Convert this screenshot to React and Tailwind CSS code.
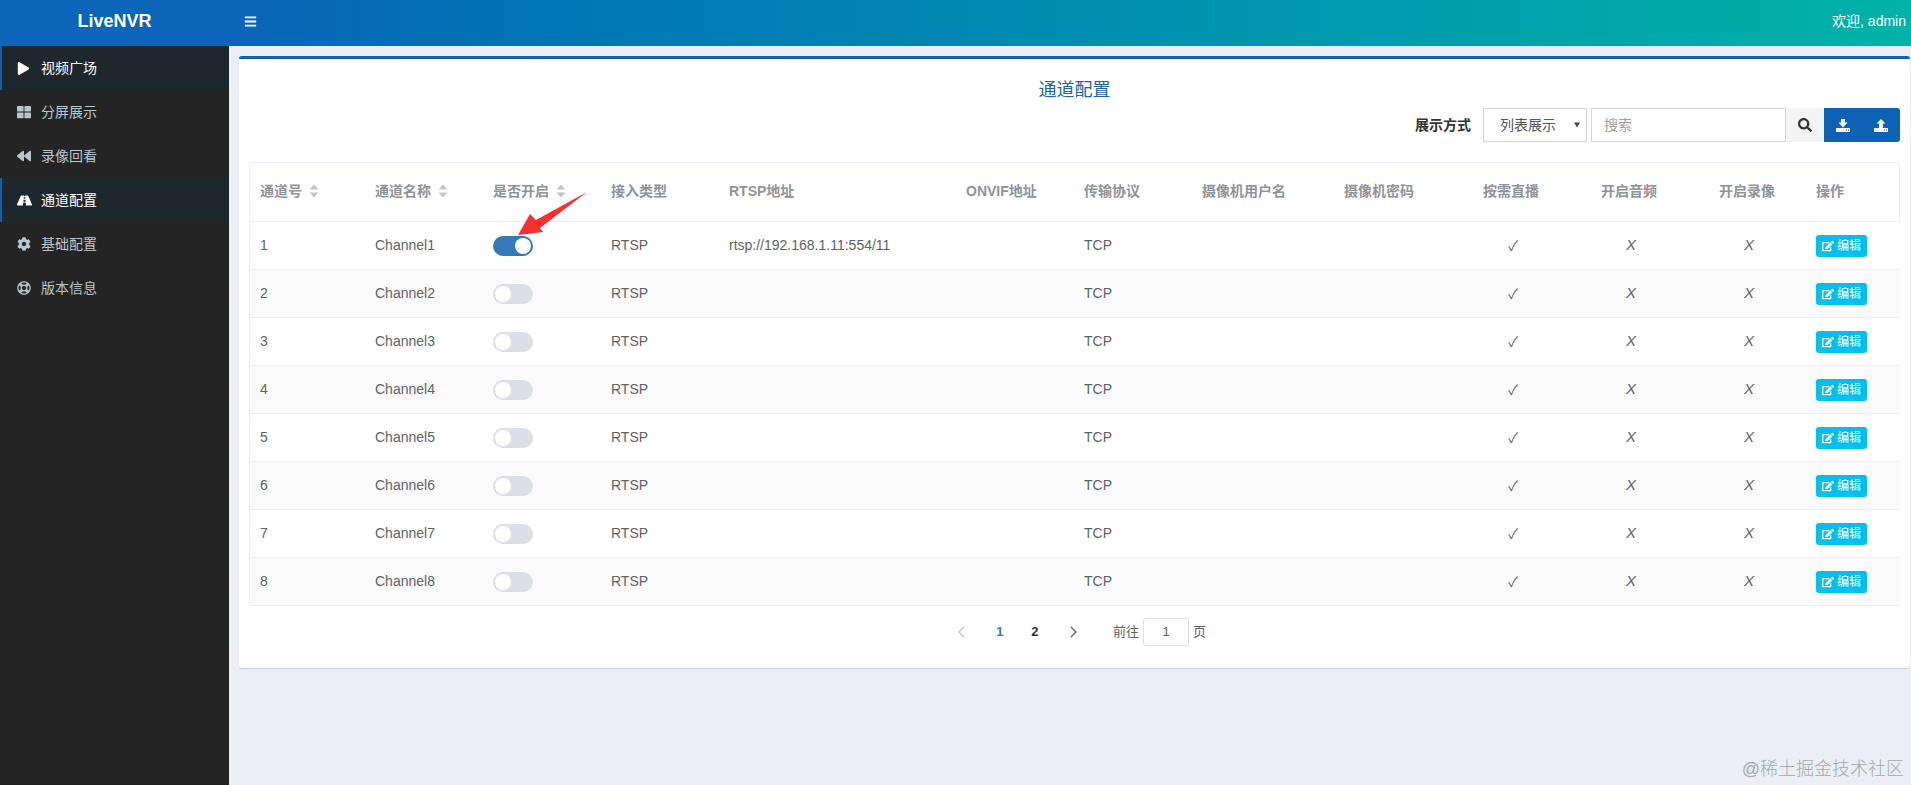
import React from 'react';
import { FaBars, FaPlay, FaThLarge, FaBackward, FaRoad, FaCog, FaRegLifeRing, FaSearch, FaEdit } from 'react-icons/fa';

const menu = [
  { label: '视频广场', icon: FaPlay, size: 'text-[13px]', active: true, bright: true },
  { label: '分屏展示', icon: FaThLarge, size: 'text-[14px]' },
  { label: '录像回看', icon: FaBackward, size: 'text-[14px]' },
  { label: '通道配置', icon: FaRoad, size: 'text-[15px]', active: true, bright: true },
  { label: '基础配置', icon: FaCog, size: 'text-[14px]' },
  { label: '版本信息', icon: FaRegLifeRing, size: 'text-[14px]' },
];

const headers = [
  { label: '通道号', sort: true },
  { label: '通道名称', sort: true },
  { label: '是否开启', sort: true },
  { label: '接入类型' },
  { label: 'RTSP地址' },
  { label: 'ONVIF地址' },
  { label: '传输协议' },
  { label: '摄像机用户名' },
  { label: '摄像机密码' },
  { label: '按需直播', center: true },
  { label: '开启音频', center: true },
  { label: '开启录像', center: true },
  { label: '操作' },
];

const widths = ['w-[115px]', 'w-[118px]', 'w-[118px]', 'w-[118px]', 'w-[237px]', 'w-[118px]', 'w-[118px]', 'w-[142px]', 'w-[118px]', 'w-[118px]', 'w-[118px]', 'w-[118px]', 'w-[94px]'];

const rows = [1, 2, 3, 4, 5, 6, 7, 8];

function SortCaret() {
  return (
    <svg width="10" height="14" viewBox="0 0 10 14" className="ml-[7px] inline-block align-[-2px]">
      <path d="M5 0.5 L9.5 5.5 L0.5 5.5 Z" fill="#c0c4cc" />
      <path d="M5 13.5 L9.5 8.5 L0.5 8.5 Z" fill="#c0c4cc" />
    </svg>
  );
}

function Switch({ on }) {
  return (
    <span className={`flex h-[20px] w-[40px] items-center rounded-full p-[2px] ${on ? 'justify-end bg-[#337ab7]' : 'justify-start bg-[#dcdfe6]'}`}>
      <span className="h-[16px] w-[16px] rounded-full bg-white" />
    </span>
  );
}

function Arrow() {
  return (
    <svg width="72" height="46" viewBox="0 0 72 46" className="absolute left-[25px] top-[-46px]">
      <path d="M0 45 L12 24 L18 30 L69 2 L22 38 L25 42 Z" fill="#f5302f" />
    </svg>
  );
}

function Tray() {
  return (
    <>
      <path d="M0 9 H14 V13 H0 Z" fill="white" />
      <path d="M10 10.5 H11 V11.5 H10 Z M12 10.5 H13 V11.5 H12 Z" fill="#0d62b4" />
    </>
  );
}

export default function App() {
  return (
    <div className="flex h-[785px] flex-col overflow-hidden bg-[#ebeff5] font-['Liberation_Sans','Noto_Sans_CJK_SC',sans-serif] text-[14px]">
      <header className="flex h-[46px] shrink-0 items-center bg-linear-to-r from-[#0b65b8] from-12% to-[#00b3a6] pb-[4px] text-white">
        <div className="w-[229px] text-center text-[18px] font-bold">LiveNVR</div>
        <FaBars className="ml-[15px] text-[13px]" />
        <div className="ml-auto pr-[5px] text-[14px]">欢迎, admin</div>
      </header>

      <div className="relative flex min-h-0 flex-1">
        <aside className="w-[229px] shrink-0 bg-[#242424]">
          {menu.map((item) => {
            const Icon = item.icon;
            return (
              <div
                key={item.label}
                className={`flex h-[44px] items-center border-l-2 pl-[15px] ${item.active ? 'border-[#0b62b4] bg-[#1e282c]' : 'border-transparent'} ${item.bright ? 'text-white' : 'text-[#b8c7ce]'}`}
              >
                <span className="flex w-[24px] shrink-0 items-center"><Icon className={item.size} /></span>
                <span>{item.label}</span>
              </div>
            );
          })}
        </aside>

        <main className="min-w-0 flex-1 pl-[10px] pr-[1px] pt-[10px]">
          <section className="h-[612px] rounded-[3px] border-t-[3px] border-[#0b62b4] bg-white px-[10px] shadow-[0_1px_1px_rgba(0,0,0,0.15)]">
            <h2 className="pt-[19px] text-center text-[18px] leading-[24px] text-[#1a68a5]">通道配置</h2>

            <div className="mt-[6px] flex h-[34px] items-center justify-end">
              <span className="mr-[12px] font-bold text-[#333333]">展示方式</span>
              <div className="relative mr-[4px] h-[34px] w-[104px]">
                <select className="h-full w-full appearance-none border border-[#d2d6de] bg-white pl-[16px] text-[14px] text-[#555555] outline-none">
                  <option>列表展示</option>
                </select>
                <svg width="6" height="6" viewBox="0 0 7 6" className="absolute right-[7px] top-[14px]">
                  <path d="M0 0 H7 L3.5 6 Z" fill="#444444" />
                </svg>
              </div>
              <input
                placeholder="搜索"
                className="h-[34px] w-[195px] border border-[#d2d6de] bg-white pl-[12px] text-[14px] outline-none placeholder:text-[#a0a0a0]"
              />
              <button className="flex h-[34px] w-[38px] items-center justify-center bg-[#f4f4f4] text-[#333333]">
                <FaSearch className="text-[14px]" />
              </button>
              <div className="flex h-[34px] w-[76px] items-center rounded-r-[3px] bg-[#0d62b4] text-white">
                <button className="flex w-[38px] justify-center">
                  <svg width="14" height="13" viewBox="0 0 14 13" fill="white">
                    <path d="M5 0 H9 V3.5 H11.5 L7 8.5 L2.5 3.5 H5 Z" />
                    <Tray />
                  </svg>
                </button>
                <button className="flex w-[38px] justify-center">
                  <svg width="14" height="13" viewBox="0 0 14 13" fill="white">
                    <path d="M7 0 L11.5 4.5 H9 V9 H5 V4.5 H2.5 Z" />
                    <Tray />
                  </svg>
                </button>
              </div>
            </div>

            <div className="mt-[20px] rounded-[2px] border border-b-0 border-[#ebeef5]">
              <table className="w-full table-fixed border-collapse">
                <colgroup>
                  {widths.map((w, i) => <col key={i} className={w} />)}
                </colgroup>
                <thead>
                  <tr className="h-[58px] border-b border-[#ebeef5]">
                    {headers.map((h) => (
                      <th key={h.label} className={`px-[10px] pb-[1px] font-bold text-[#909399] ${h.center ? 'text-center' : 'text-left'}`}>
                        {h.label}
                        {h.sort && <SortCaret />}
                      </th>
                    ))}
                  </tr>
                </thead>
                <tbody>
                  {rows.map((n) => (
                    <tr key={n} className={`h-[48px] border-b border-[#ebeef5] text-[#606266] ${n % 2 === 0 ? 'bg-[#fafafa]' : 'bg-white'}`}>
                      <td className="px-[10px]">{n}</td>
                      <td className="px-[10px]">Channel{n}</td>
                      <td className="px-[10px] pt-[2px]">
                        <div className="relative">
                          <Switch on={n === 1} />
                          {n === 1 && <Arrow />}
                        </div>
                      </td>
                      <td className="px-[10px]">RTSP</td>
                      <td className="px-[10px]">{n === 1 ? 'rtsp://192.168.1.11:554/11' : ''}</td>
                      <td className="px-[10px]" />
                      <td className="px-[10px]">TCP</td>
                      <td className="px-[10px]" />
                      <td className="px-[10px]" />
                      <td className="pl-[12px] pr-[8px] text-center font-['Noto_Sans_CJK_JP',sans-serif]">✓</td>
                      <td className="pl-[12px] pr-[8px] text-center text-[15px] italic">X</td>
                      <td className="pl-[12px] pr-[8px] text-center text-[15px] italic">X</td>
                      <td className="px-[10px] pt-[2px]">
                        <button className="flex h-[22px] w-[51px] items-center justify-center gap-[3px] rounded-[3px] bg-[#00c0ef] text-[12px] text-white">
                          <FaEdit className="text-[12px]" />
                          编辑
                        </button>
                      </td>
                    </tr>
                  ))}
                </tbody>
              </table>
            </div>

            <div className="mt-[12px] flex h-[28px] items-center justify-center text-[#606266]">
              <span className="flex w-[36px] justify-center">
                <svg width="8" height="12" viewBox="0 0 8 12" fill="none" stroke="#c0c4cc" strokeWidth="1.3"><path d="M7 1 L2 6 L7 11" /></svg>
              </span>
              <span className="ml-[3px] w-[36px] text-center text-[13px] font-bold text-[#337ab7]">1</span>
              <span className="ml-[-1px] w-[36px] text-center text-[13px] font-bold text-[#303133]">2</span>
              <span className="ml-[3px] flex w-[36px] justify-center">
                <svg width="8" height="12" viewBox="0 0 8 12" fill="none" stroke="#606266" strokeWidth="1.3"><path d="M1 1 L6 6 L1 11" /></svg>
              </span>
              <span className="ml-[21px] text-[13px]">前往</span>
              <input defaultValue="1" className="mx-[4px] h-[28px] w-[46px] rounded-[3px] border border-[#dcdfe6] text-center text-[13px] text-[#606266] outline-none" />
              <span className="text-[13px]">页</span>
            </div>
          </section>
        </main>

        <div className="absolute bottom-[2px] right-[7px] text-[18px] font-light text-[#a3a8ae]">@稀土掘金技术社区</div>
      </div>
    </div>
  );
}
